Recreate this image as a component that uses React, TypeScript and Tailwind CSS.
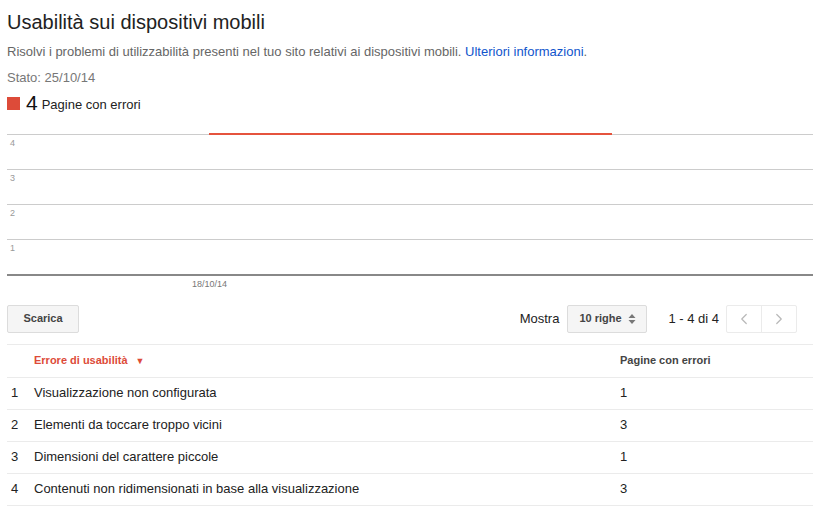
import {ChevronLeft, ChevronRight} from 'lucide-react';

const rows = [
    {n: 1, label: 'Visualizzazione non configurata', pages: 1},
    {n: 2, label: 'Elementi da toccare troppo vicini', pages: 3},
    {n: 3, label: 'Dimensioni del carattere piccole', pages: 1},
    {n: 4, label: 'Contenuti non ridimensionati in base alla visualizzazione', pages: 3},
];

const Chart = () => (
    <div className="mt-[19px]">
        <div className="relative">
            {[4, 3, 2, 1].map((v) => (
                <div key={v} className="h-[35px] border-t border-[#cccccc] pl-[3px] pt-[3px] text-[9px] leading-[10px] text-[#999999]">
                    {v}
                </div>
            ))}
            <div className="absolute left-[202px] top-[-1px] h-[2px] w-[403px] bg-[#e5533d]" />
        </div>
        <div className="border-t-2 border-[#888888]" />
        <div className="pl-[185px] pt-[3px] text-[9px] leading-[10px] text-[#777777]">18/10/14</div>
    </div>
);

const Toolbar = () => (
    <div className="mt-[16px] flex items-center">
        <button className="h-[28px] w-[72px] rounded-[2px] border border-[#dcdcdc] bg-[#f5f5f5] text-[11px] font-bold text-[#444444]">
            Scarica
        </button>
        <div className="ml-auto mr-[16px] flex items-center">
            <span className="text-[13px] text-[#222222]">Mostra</span>
            <div className="ml-[8px] flex h-[28px] w-[80px] items-center justify-between rounded-[2px] border border-[#dcdcdc] bg-[#f5f5f5] pl-[11px] pr-[10px]">
                <span className="text-[11px] font-bold text-[#444444]">10 righe</span>
                <svg width="8" height="12" viewBox="0 0 8 12">
                    <path d="M4 1 L7.5 5 L0.5 5 Z" fill="#777777" />
                    <path d="M4 11 L7.5 7 L0.5 7 Z" fill="#777777" />
                </svg>
            </div>
            <span className="ml-[21px] text-[13px] text-[#222222]">1 - 4 di 4</span>
            <div className="ml-[7px] flex h-[28px] rounded-[2px] border border-[#ebebeb] bg-white">
                <div className="flex w-[35px] items-center justify-center border-r border-[#ebebeb]">
                    <ChevronLeft size={18} strokeWidth={1.6} color="#b8b8b8" />
                </div>
                <div className="flex w-[34px] items-center justify-center">
                    <ChevronRight size={18} strokeWidth={1.6} color="#b8b8b8" />
                </div>
            </div>
        </div>
    </div>
);

const Table = () => (
    <div className="mt-[11px] border-t border-[#ebebeb]">
        <div className="flex h-[33px] items-center border-b border-[#ebebeb] text-[11px] font-bold">
            <div className="w-[27px]" />
            <div className="w-[586px] text-[#dd4b39]">
                Errore di usabilità <span className="ml-[5px] text-[9px]">▼</span>
            </div>
            <div className="text-[#444444]">Pagine con errori</div>
        </div>
        {rows.map((r) => (
            <div key={r.n} className="flex h-[32px] items-center border-b border-[#ebebeb] text-[13px] text-[#222222]">
                <div className="w-[27px] pl-[4px]">{r.n}</div>
                <div className="w-[586px]">{r.label}</div>
                <div>{r.pages}</div>
            </div>
        ))}
    </div>
);

export default function App() {
    return (
        <div className="h-[515px] w-[836px] bg-white pl-[7px] pt-[9px] font-['Liberation_Sans',Arial,sans-serif]">
            <div className="w-[806px]">
                <h1 className="text-[20px] leading-[26px] text-[#222222]">Usabilità sui dispositivi mobili</h1>
                <p className="mt-[9px] text-[13px] leading-[16px] text-[#666666]">
                    Risolvi i problemi di utilizzabilità presenti nel tuo sito relativi ai dispositivi mobili.{' '}
                    <span className="text-[#1155cc]">Ulteriori informazioni</span>.
                </p>
                <p className="mt-[10px] text-[13px] leading-[16px] text-[#777777]">Stato: 25/10/14</p>
                <div className="mt-[6px] flex items-center">
                    <div className="h-[13px] w-[13px] bg-[#dd4b39]" />
                    <span className="ml-[6px] text-[21px] leading-[22px] text-[#111111]">4</span>
                    <span className="ml-[4px] mt-[3px] text-[13px] text-[#222222]">Pagine con errori</span>
                </div>
                <Chart />
                <Toolbar />
                <Table />
            </div>
        </div>
    );
}
